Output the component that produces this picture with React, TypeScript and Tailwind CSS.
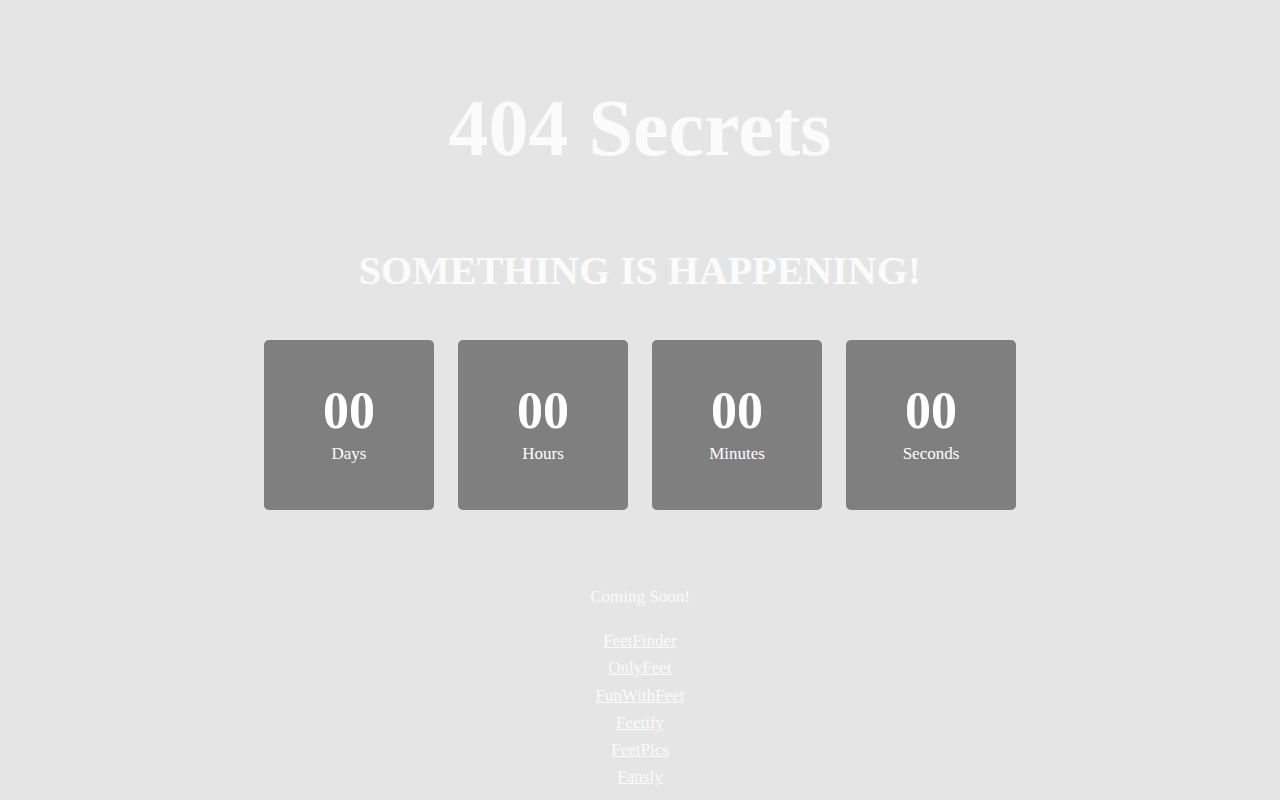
import React from "react";

const UNITS = ["Days", "Hours", "Minutes", "Seconds"];
const LINKS = ["FeetFinder", "OnlyFeet", "FunWithFeet", "Feetify", "FeetPics", "Fansly"];

export default function App() {
  return (
    <div
      className="min-h-[800px] bg-[#e5e5e5] text-[#fbfbfb] flex flex-col items-center"
      style={{ fontFamily: '"Liberation Serif", "Times New Roman", serif' }}
    >
      {/* Header */}
      <h1 className="mt-[82px] text-[80px] font-bold leading-[92px]">404 Secrets</h1>
      <h2 className="mt-[74px] text-[40px] font-bold leading-[46px]">SOMETHING IS HAPPENING!</h2>

      {/* Countdown */}
      <div className="mt-[46px] flex gap-6">
        {UNITS.map(unit => (
          <div
            key={unit}
            className="w-[170px] h-[170px] rounded-[5px] bg-[#7f7f7f] text-white flex flex-col items-center justify-center gap-2 pb-1"
          >
            <div className="text-[52px] font-bold leading-none">00</div>
            <div className="text-[17px] leading-none">{unit}</div>
          </div>
        ))}
      </div>

      {/* Footer */}
      <p className="mt-[73px] text-[17px] leading-[27px]">Coming Soon!</p>
      <div className="mt-[17px] flex flex-col items-center text-[17px] leading-[27.3px]">
        {LINKS.map(link => (
          <a key={link} href="#" className="underline text-[#fbfbfb]">
            {link}
          </a>
        ))}
      </div>
    </div>
  );
}
